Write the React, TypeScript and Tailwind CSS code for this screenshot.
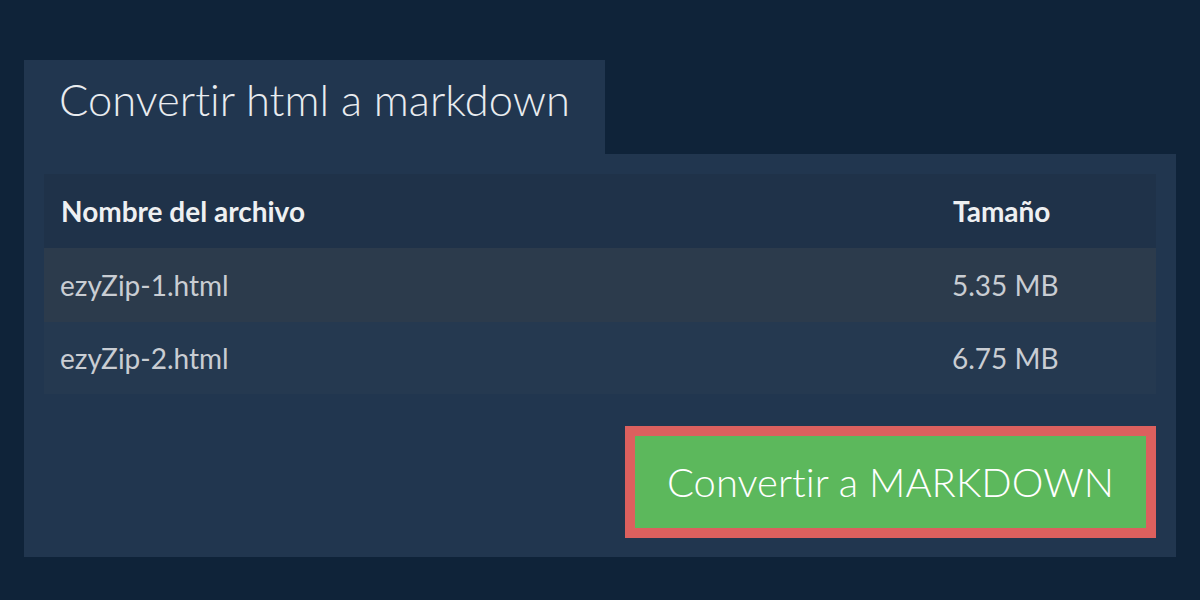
export default function App() {
  return (
    <div className="min-h-[600px] w-[1200px] bg-[#0f2339] px-6 pt-[60px] pb-[43px] [font-variant-ligatures:none]" style={{ fontFamily: "Lato, 'Open Sans', sans-serif" }}>
      <div className="flex">
        <div className="h-[94px] w-[581px] bg-[#21364f] pl-[35px] pt-[18px]">
          <h1 className="text-[43.5px] font-light leading-none text-[#e9ecef]">Convertir html a markdown</h1>
        </div>
      </div>
      <div className="bg-[#21364f] px-5 pt-5 pb-[19px]">
        <div className="flex flex-col">
          <div className="flex h-[74px] items-center bg-[#1f3249] text-[28px] font-bold text-[#eef0f2]">
            <div className="flex-1 pl-[17px]">Nombre del archivo</div>
            <div className="w-[220px] pl-[17px]">Tamaño</div>
          </div>
          <div className="flex h-[74px] items-center bg-[#2c3b4c] text-[28px] text-[#c9cdd3]">
            <div className="flex-1 pl-[16px]">ezyZip-1.html</div>
            <div className="w-[220px] pl-[16px]">5.35 MB</div>
          </div>
          <div className="flex h-[72px] items-center bg-[#253950] text-[28px] text-[#c9cdd3]">
            <div className="flex-1 pl-[16px]">ezyZip-2.html</div>
            <div className="w-[220px] pl-[16px]">6.75 MB</div>
          </div>
        </div>
        <div className="mt-8 flex justify-end">
          <button className="flex h-[112px] w-[531px] items-center justify-center border-[10px] border-[#dc605e] bg-[#5cb85c] text-[40px] font-light leading-none text-white">
            Convertir a MARKDOWN
          </button>
        </div>
      </div>
    </div>
  );
}
